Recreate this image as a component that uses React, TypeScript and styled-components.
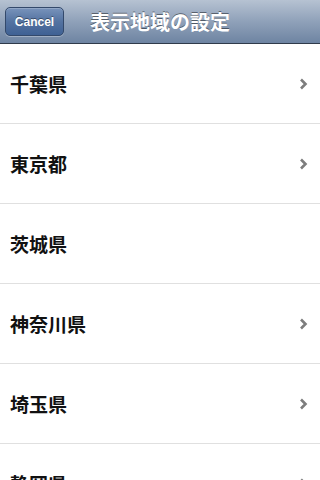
import React from 'react';
import styled, { createGlobalStyle } from 'styled-components';

const GlobalStyle = createGlobalStyle`
  html, body {
    margin: 0;
    padding: 0;
    background: #ffffff;
  }
  body {
    font-family: "Liberation Sans", "Noto Sans CJK JP", sans-serif;
    overflow: hidden;
  }
`;

const Screen = styled.div`
  width: 320px;
  height: 480px;
  overflow: hidden;
  display: flex;
  flex-direction: column;
`;

const NavBar = styled.div`
  position: relative;
  flex: 0 0 auto;
  height: 43px;
  display: flex;
  align-items: center;
  justify-content: center;
  background: linear-gradient(to bottom, #b6c2d2 0%, #8fa1b9 50%, #6e84a2 100%);
  border-bottom: 1px solid #2f3a4a;
`;

const CancelButton = styled.button`
  position: absolute;
  left: 5px;
  top: 7px;
  width: 59px;
  height: 29px;
  padding: 0;
  border: 1px solid #33496b;
  border-radius: 5px;
  background: linear-gradient(to bottom, #7893bb 0%, #5473a1 50%, #3f6194 100%);
  box-shadow: inset 0 1px 0 rgba(255, 255, 255, 0.2), 0 1px 0 rgba(255, 255, 255, 0.3);
  color: #ffffff;
  font-family: "Liberation Sans", sans-serif;
  font-weight: bold;
  font-size: 12px;
  text-shadow: 0 -1px 0 rgba(0, 0, 0, 0.4);
`;

const Title = styled.h1`
  margin: 0;
  color: #ffffff;
  font-family: "Noto Sans CJK JP", sans-serif;
  font-size: 20px;
  font-weight: bold;
  text-shadow: 0 -1px 0 rgba(0, 0, 0, 0.45);
`;

const List = styled.ul`
  list-style: none;
  margin: 0;
  padding: 0;
`;

const Row = styled.li`
  height: 79px;
  display: flex;
  align-items: center;
  justify-content: space-between;
  padding: 0 12px 0 10px;
  border-bottom: 1px solid #e0e0e0;
`;

const Label = styled.span`
  font-family: "Noto Sans CJK JP", sans-serif;
  font-size: 19px;
  font-weight: bold;
  color: #111111;
`;

const Chevron = () => (
  <svg width="9" height="12" viewBox="0 0 9 12">
    <path d="M2 1.5 L6.5 6 L2 10.5" fill="none" stroke="#7d7d7d" strokeWidth="2.6" />
  </svg>
);

const regions = [
  { name: '千葉県', more: true },
  { name: '東京都', more: true },
  { name: '茨城県', more: false },
  { name: '神奈川県', more: true },
  { name: '埼玉県', more: true },
  { name: '静岡県', more: true },
];

export default function App() {
  return (
    <Screen>
      <GlobalStyle />
      <NavBar>
        <CancelButton>Cancel</CancelButton>
        <Title>表示地域の設定</Title>
      </NavBar>
      <List>
        {regions.map((r) => (
          <Row key={r.name}>
            <Label>{r.name}</Label>
            {r.more && <Chevron />}
          </Row>
        ))}
      </List>
    </Screen>
  );
}
